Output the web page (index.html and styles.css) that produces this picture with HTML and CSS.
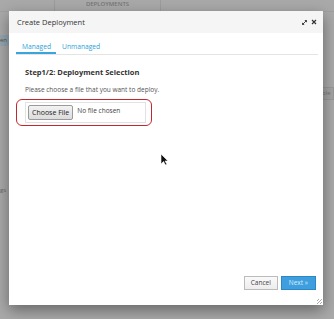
FILE: index.html
```html
<!DOCTYPE html>
<html lang="en">
<head>
    <meta charset="UTF-8">
    <title>Create Deployment</title>
    <link rel="stylesheet" href="styles.css">
</head>
<body>
    <div class="backdrop">
        <div class="bg-top">
            <div class="bg-cell narrow"></div>
            <div class="bg-cell wide">DEPLOYMENTS</div>
            <div class="bg-cell rest"></div>
        </div>
        <div class="bg-left-btn">en</div>
        <div class="bg-right-btn">ble</div>
        <div class="bg-left-text">gs</div>
    </div>

    <div class="modal">
        <div class="modal-header">
            <span class="modal-title">Create Deployment</span>
            <span class="modal-icons">
                <svg width="5" height="5" viewBox="0 0 5 5"><path d="M0.5 4.5 L4.5 0.5 M2.8 0.5 H4.5 V2.2 M0.5 2.8 V4.5 H2.2" stroke="#333" stroke-width="0.9" fill="none"/></svg>
                <svg width="6" height="6" viewBox="0 0 6 6"><path d="M1 1 L5 5 M5 1 L1 5" stroke="#333" stroke-width="1.2"/></svg>
            </span>
        </div>
        <div class="modal-body">
            <div class="tabs">
                <a class="tab active">Managed</a>
                <a class="tab">Unmanaged</a>
            </div>
            <h3 class="step">Step1/2: Deployment Selection</h3>
            <p class="hint">Please choose a file that you want to deploy.</p>
            <div class="highlight">
                <div class="file-box">
                    <span class="file-btn">Choose File</span>
                    <span class="file-name">No file chosen</span>
                </div>
            </div>
            <div class="cursor">
                <svg width="9" height="13" viewBox="0 0 9 13"><path d="M1 1 V11 L3.5 8.5 L5.5 12 L7 11.3 L5 8 H8 Z" fill="#111" stroke="#fff" stroke-width="0.6"/></svg>
            </div>
        </div>
        <div class="modal-footer">
            <span class="btn">Cancel</span>
            <span class="btn primary">Next &raquo;</span>
        </div>
        <div class="grip"></div>
    </div>
</body>
</html>
```

FILE: styles.css
```css
body {
    margin: 0;
    width: 334px;
    height: 319px;
    overflow: hidden;
    background-color: #a9a9a9;
    font-family: 'Open Sans', sans-serif;
    color: #333;
    position: relative;
}
.backdrop {
    height: 319px;
    position: relative;
}
.bg-top {
    display: flex;
    height: 11px;
    border-bottom: 1px solid #a0a0a0;
}
.bg-cell {
    border-right: 1px solid #9c9c9c;
    font-size: 6px;
    font-weight: 600;
    color: #777;
    text-align: center;
    line-height: 9px;
}
.bg-cell.narrow {
    width: 54px;
}
.bg-cell.wide {
    width: 105px;
}
.bg-cell.rest {
    flex: 1;
    border-right: none;
}
.bg-left-btn {
    position: absolute;
    left: 0;
    top: 35px;
    width: 9px;
    height: 11px;
    background-color: #94a6b0;
    font-size: 6px;
    line-height: 11px;
    color: #555;
    overflow: hidden;
}
.bg-right-btn {
    position: absolute;
    right: 0;
    top: 87px;
    width: 11px;
    height: 11px;
    border: 1px solid #999;
    background-color: #a4a4a4;
    font-size: 6px;
    line-height: 11px;
    color: #777;
    overflow: hidden;
}
.bg-left-text {
    position: absolute;
    left: 0;
    top: 186px;
    font-size: 6px;
    color: #666;
}
.modal {
    position: absolute;
    left: 9px;
    top: 11px;
    width: 314px;
    height: 294px;
    background-color: #fff;
    box-shadow: 0 5px 14px rgba(0, 0, 0, 0.4);
    display: flex;
    flex-direction: column;
}
.modal-header {
    height: 22px;
    background-color: #f5f5f5;
    display: flex;
    align-items: center;
    justify-content: space-between;
    padding: 0 6px 0 8px;
}
.modal-title {
    font-size: 7.5px;
    color: #333;
}
.modal-icons {
    display: flex;
    gap: 4px;
    align-items: center;
}
.modal-body {
    flex: 1;
    padding: 7px 5px 0 7px;
    position: relative;
}
.tabs {
    display: flex;
    border-bottom: 1px solid #e4e4e4;
    height: 14px;
}
.tab {
    font-size: 6.7px;
    color: #2a9fd8;
    padding: 0 6px;
    line-height: 13px;
}
.tab.active {
    border-bottom: 2px solid #39a5dc;
    padding: 0 5px 0 6px;
}
.step {
    font-size: 7.5px;
    font-weight: 700;
    margin: 12px 0 0 9px;
    color: #333;
}
.hint {
    font-size: 6.5px;
    color: #555;
    margin: 8px 0 0 9px;
}
.highlight {
    width: 136px;
    height: 27px;
    margin-top: 5px;
    border: 1px solid #c4262e;
    border-radius: 6px;
    display: flex;
    align-items: center;
    padding-left: 8px;
    box-sizing: border-box;
}
.file-box {
    width: 121px;
    height: 21px;
    border: 1px solid #e2e2e2;
    display: flex;
    align-items: center;
    gap: 4px;
    padding-left: 2px;
    box-sizing: border-box;
}
.file-btn {
    font-size: 7px;
    background: linear-gradient(#f3f3f3, #dcdcdc);
    border: 1px solid #9a9a9a;
    border-radius: 2px;
    padding: 1px 3px;
    line-height: 11px;
    color: #222;
}
.file-name {
    font-size: 6.5px;
    color: #444;
    margin-top: -4px;
}
.cursor {
    position: absolute;
    left: 151px;
    top: 116px;
}
.modal-footer {
    display: flex;
    justify-content: flex-end;
    gap: 3px;
    padding: 0 7px 15px 0;
}
.btn {
    font-size: 6.5px;
    height: 12px;
    line-height: 12px;
    padding: 0 6px;
    border: 1px solid #bbb;
    background: linear-gradient(#fafafa, #ededed);
    color: #444;
}
.btn.primary {
    background: #3f9fde;
    border-color: #2a88c7;
    color: #d8ecfa;
    padding: 0 7px;
}
.grip {
    position: absolute;
    right: 1px;
    bottom: 1px;
    width: 5px;
    height: 5px;
    background: repeating-linear-gradient(135deg, transparent 0 1px, #aaa 1px 2px);
}
```
